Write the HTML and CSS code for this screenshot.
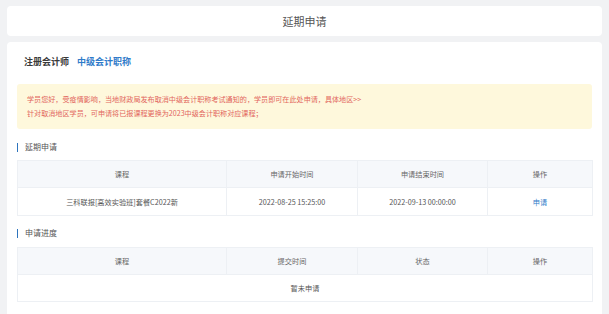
FILE: index.html
```html
<!DOCTYPE html>
<html lang="zh-CN">
<head>
<meta charset="utf-8">
<title>延期申请</title>
<link rel="stylesheet" href="styles.css">
</head>
<body>
<div class="page">
  <div class="top-card">延期申请</div>
  <div class="main-card">
    <div class="crumb"><span class="crumb-main">注册会计师</span><span class="crumb-sub">中级会计职称</span></div>
    <div class="notice">
      <p>学员您好，受疫情影响，当地财政局发布取消中级会计职称考试通知的，学员即可在此处申请，具体地区&gt;&gt;</p>
      <p>针对取消地区学员，可申请将已报课程更换为2023中级会计职称对应课程；</p>
    </div>
    <div class="sec-title">延期申请</div>
    <table class="grid">
      <colgroup><col class="c1"><col class="c2"><col class="c3"><col class="c4"></colgroup>
      <thead>
        <tr><th>课程</th><th>申请开始时间</th><th>申请结束时间</th><th>操作</th></tr>
      </thead>
      <tbody>
        <tr><td>三科联报[高效实验班]套餐C2022新</td><td>2022-08-25 15:25:00</td><td>2022-09-13 00:00:00</td><td><a class="link">申请</a></td></tr>
      </tbody>
    </table>
    <div class="sec-title sec-2">申请进度</div>
    <table class="grid">
      <colgroup><col class="c1"><col class="c2"><col class="c3"><col class="c4"></colgroup>
      <thead>
        <tr><th>课程</th><th>提交时间</th><th>状态</th><th>操作</th></tr>
      </thead>
      <tbody>
        <tr><td colspan="4" class="empty">暂未申请</td></tr>
      </tbody>
    </table>
  </div>
</div>
</body>
</html>
```

FILE: styles.css
```css
* { box-sizing: border-box; }
html, body {
  margin: 0;
  padding: 0;
  background: #f1f2f4;
  font-family: "Noto Sans CJK SC", "Noto Sans", sans-serif;
  color: #333;
}
.page {
  padding: 6px 7px 0 7px;
  display: flex;
  flex-direction: column;
  gap: 6px;
  height: 314px;
  overflow: hidden;
}
.top-card {
  background: #fff;
  border-radius: 4px;
  height: 30px;
  line-height: 30px;
  text-align: center;
  font-size: 11px;
  color: #555;
}
.main-card {
  background: #fff;
  border-radius: 4px 4px 0 0;
  padding: 13px 10px 20px 10px;
  flex: 1;
}
.crumb {
  line-height: 14px;
  font-size: 9px;
  font-weight: bold;
  padding-left: 7px;
  display: flex;
  gap: 8px;
}
.crumb-main { color: #3a3a3a; }
.crumb-sub { color: #2f7bc9; }
.notice {
  margin-top: 15px;
  background: #fef8dc;
  border-radius: 3px;
  padding: 8px 10px 9px 10px;
  color: #e2665c;
  font-size: 7.1px;
  line-height: 14px;
}
.notice p { margin: 0; }
.sec-title {
  margin-top: 12px;
  display: flex;
  align-items: center;
  gap: 7px;
  font-size: 8px;
  line-height: 12px;
  color: #555;
}
.sec-title::before {
  content: "";
  width: 1px;
  height: 9px;
  background: #2d74bd;
}
.sec-2 { margin-top: 11px; }
.grid {
  margin-top: 7px;
  width: 575px;
  border-collapse: collapse;
  table-layout: fixed;
  font-size: 7.2px;
  color: #555;
}
.sec-2 + .grid { margin-top: 8px; }
.c1 { width: 209px; }
.c2 { width: 131px; }
.c3 { width: 130px; }
.c4 { width: 105px; }
.grid th, .grid td {
  border: 1px solid #edf0f4;
  text-align: center;
  padding: 0;
  font-weight: normal;
}
.grid th {
  background: #f6f8fb;
  height: 27px;
  color: #666;
}
.grid td {
  height: 28px;
}
.grid td.empty { height: 27px; }
.link { color: #2f7bc9; }
```
